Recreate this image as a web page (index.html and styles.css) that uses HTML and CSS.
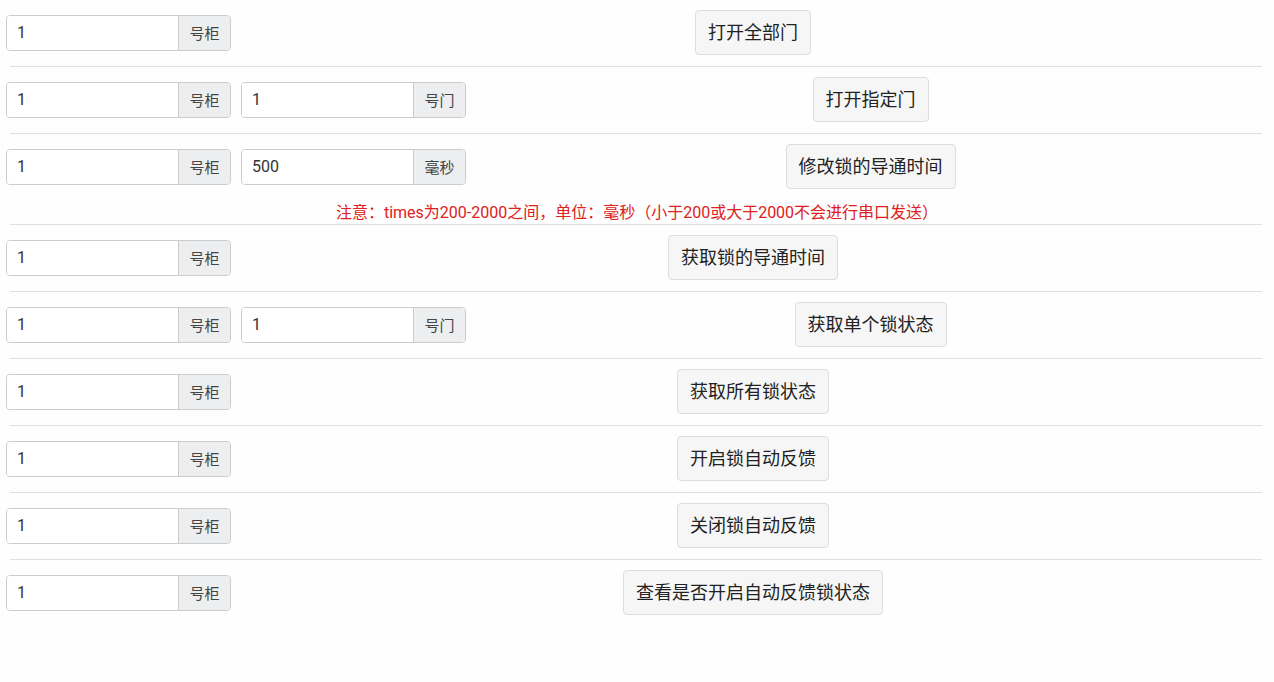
FILE: index.html
```html
<!DOCTYPE html>
<html lang="zh-CN">
<head>
    <meta charset="UTF-8">
    <title>锁控板调试</title>
    <link rel="stylesheet" href="styles.css">
</head>
<body>
    <div class="panel">
        <div class="row">
            <div class="field-group"><input type="text" value="1"><span class="addon">号柜</span></div>
            <div class="action"><button class="btn">打开全部门</button></div>
        </div>
        <hr>
        <div class="row">
            <div class="field-group"><input type="text" value="1"><span class="addon">号柜</span></div>
            <div class="field-group"><input type="text" value="1"><span class="addon">号门</span></div>
            <div class="action"><button class="btn">打开指定门</button></div>
        </div>
        <hr>
        <div class="row">
            <div class="field-group"><input type="text" value="1"><span class="addon">号柜</span></div>
            <div class="field-group"><input type="text" value="500"><span class="addon">毫秒</span></div>
            <div class="action"><button class="btn">修改锁的导通时间</button></div>
        </div>
        <p class="note">注意：times为200-2000之间，单位：毫秒（小于200或大于2000不会进行串口发送）</p>
        <hr>
        <div class="row">
            <div class="field-group"><input type="text" value="1"><span class="addon">号柜</span></div>
            <div class="action"><button class="btn">获取锁的导通时间</button></div>
        </div>
        <hr>
        <div class="row">
            <div class="field-group"><input type="text" value="1"><span class="addon">号柜</span></div>
            <div class="field-group"><input type="text" value="1"><span class="addon">号门</span></div>
            <div class="action"><button class="btn">获取单个锁状态</button></div>
        </div>
        <hr>
        <div class="row">
            <div class="field-group"><input type="text" value="1"><span class="addon">号柜</span></div>
            <div class="action"><button class="btn">获取所有锁状态</button></div>
        </div>
        <hr>
        <div class="row">
            <div class="field-group"><input type="text" value="1"><span class="addon">号柜</span></div>
            <div class="action"><button class="btn">开启锁自动反馈</button></div>
        </div>
        <hr>
        <div class="row">
            <div class="field-group"><input type="text" value="1"><span class="addon">号柜</span></div>
            <div class="action"><button class="btn">关闭锁自动反馈</button></div>
        </div>
        <hr>
        <div class="row">
            <div class="field-group"><input type="text" value="1"><span class="addon">号柜</span></div>
            <div class="action"><button class="btn">查看是否开启自动反馈锁状态</button></div>
        </div>
    </div>
</body>
</html>
```

FILE: styles.css
```css
body {
    margin: 0;
    background: #fefefe;
    font-family: Roboto, "Noto Sans CJK SC", sans-serif;
    color: #222;
}
.panel {
    padding-top: 10px;
}
.row {
    display: flex;
    align-items: center;
    gap: 10px;
    padding: 0 9px 0 6px;
}
.field-group {
    display: flex;
    height: 36px;
    width: 225px;
    box-sizing: border-box;
    border: 1px solid #ccc;
    border-radius: 4px;
    overflow: hidden;
}
.field-group input {
    width: 172px;
    border: none;
    border-right: 1px solid #ccc;
    padding: 0 10px;
    font-family: Roboto, "Noto Sans CJK SC", sans-serif;
    font-size: 16px;
    color: #333;
    background: #fff;
    box-sizing: border-box;
    outline: none;
}
.addon {
    flex: 1;
    display: flex;
    align-items: center;
    justify-content: center;
    background: #eceeef;
    color: #444;
    font-size: 15px;
}
.action {
    flex: 1;
    text-align: center;
}
.btn {
    font-family: Roboto, "Noto Sans CJK SC", sans-serif;
    font-size: 18px;
    line-height: 25px;
    padding: 9px 12px;
    background: #f6f6f6;
    color: #222;
    border: 1px solid #ddd;
    border-radius: 4px;
    cursor: pointer;
}
.btn:hover { background: #ececec; }
hr {
    border: none;
    border-top: 1px solid #e0e0e0;
    margin: 11px 12px 10px 10px;
}
.note {
    margin: 14px 0 -10px 0;
    text-align: center;
    color: #e02020;
    font-size: 16px;
    line-height: 20px;
}
```
